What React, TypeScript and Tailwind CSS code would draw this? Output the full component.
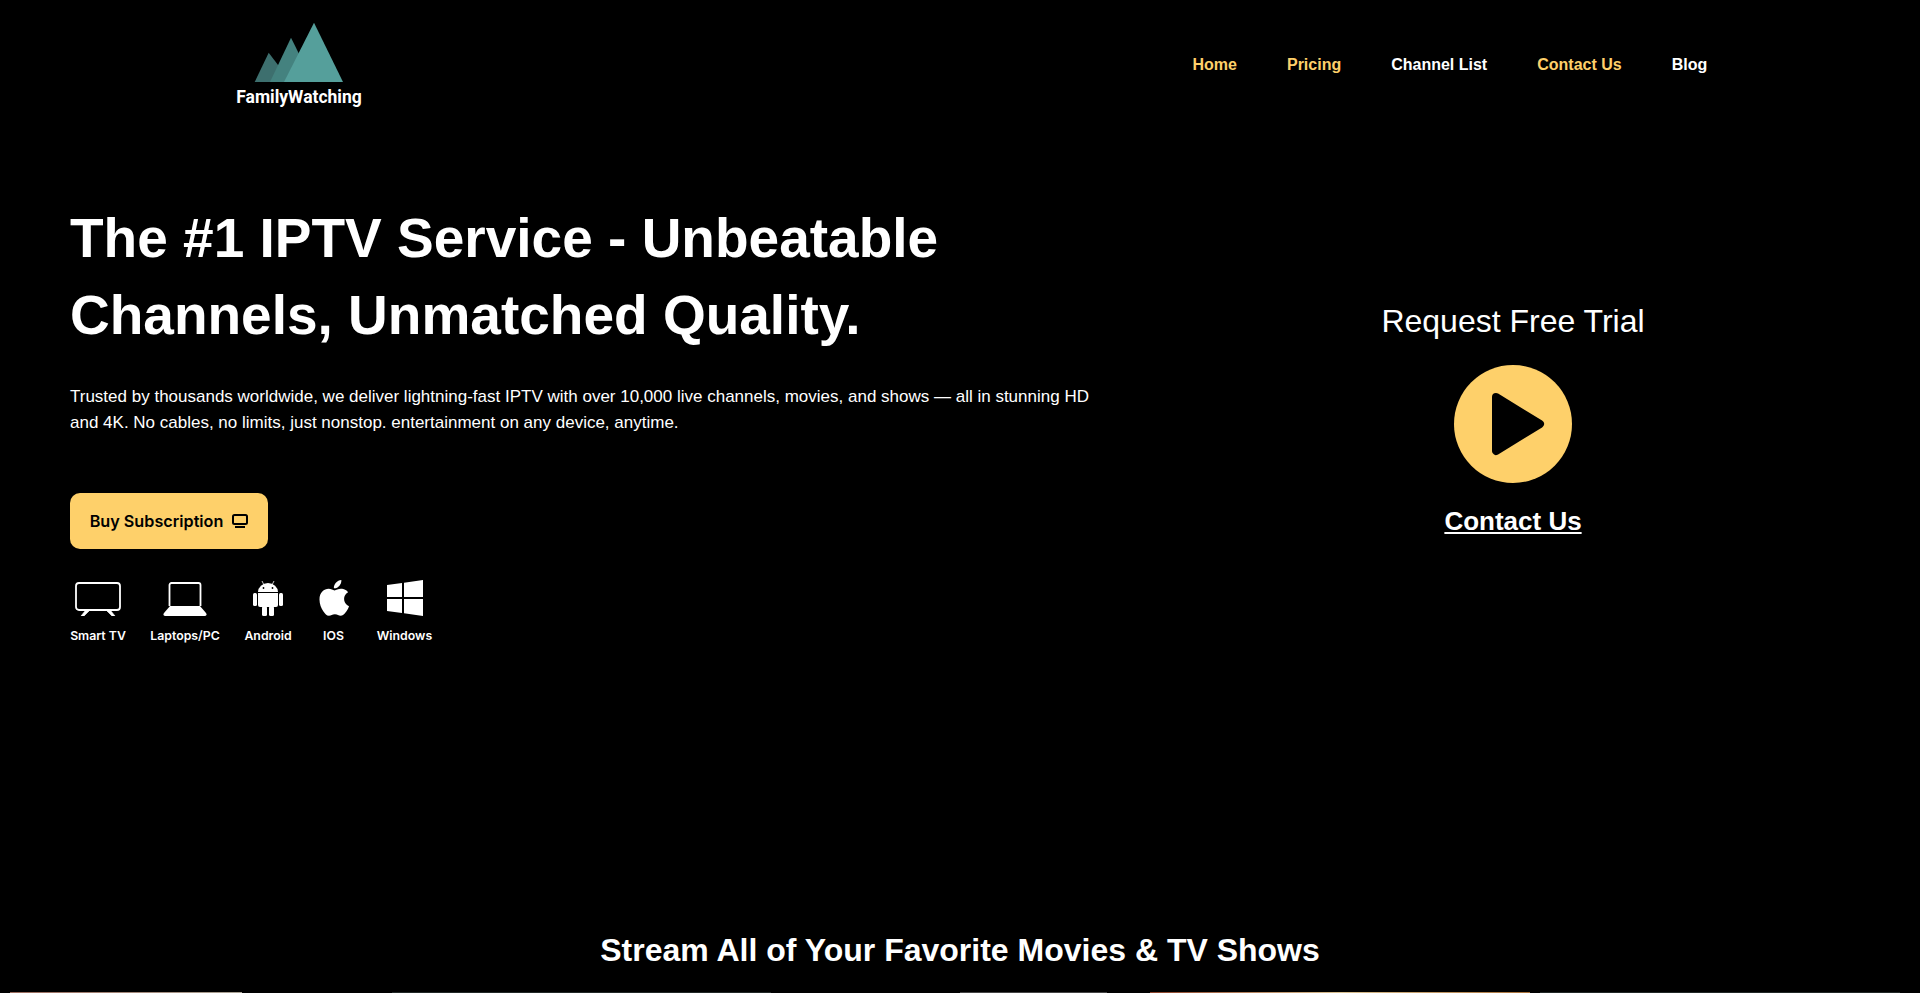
function Logo() {
  return (
    <svg width="92" height="62" viewBox="0 0 92 62">
      <polygon points="1.700,60 15.700,30.700 38,60" fill="#3d6f6e" />
      <polygon points="17,60 38,15.700 60,60" fill="#44827f" />
      <polygon points="31,60 61,0.700 90,60" fill="#559f9b" />
    </svg>
  );
}

function TvIcon() {
  return (
    <svg width="46" height="36" viewBox="0 0 46 36" fill="none" stroke="#fff">
      <rect x="1" y="3" width="44" height="27" rx="3" strokeWidth="1.800" />
      <path d="M6 36l4-5h4l-5 5zM40 36l-4-5h-4l5 5z" fill="#fff" strokeWidth="0.6" />
    </svg>
  );
}

function LaptopIcon() {
  return (
    <svg width="44" height="36" viewBox="0 0 44 36" fill="none">
      <path d="M6.500 26V5a2 2 0 012-2h27a2 2 0 012 2v21" stroke="#fff" strokeWidth="1.800" />
      <path d="M7 26h30l6 7a2 2 0 01-1 3H2a2 2 0 01-1-3z" fill="#fff" />
    </svg>
  );
}

function AndroidIcon() {
  return (
    <svg width="30" height="36" viewBox="0 0 30 36" fill="#fff">
      <path d="M5 12a10 9 0 0120 0z" />
      <path d="M9 1l2 4M21 1l-2 4" stroke="#fff" strokeWidth="0.8" />
      <circle cx="10.500" cy="8" r="0.9" fill="#000" />
      <circle cx="19.500" cy="8" r="0.9" fill="#000" />
      <path d="M5 13h20v12a2 2 0 01-2 2H7a2 2 0 01-2-2z" />
      <rect x="0" y="13" width="4" height="13" rx="1.500" />
      <rect x="26" y="13" width="4" height="13" rx="1.500" />
      <rect x="9" y="26" width="5" height="10" rx="1.500" />
      <rect x="16" y="26" width="5" height="10" rx="1.500" />
    </svg>
  );
}

function AppleIcon() {
  return (
    <svg width="30" height="36" viewBox="0 0 814 1000" fill="#fff" preserveAspectRatio="none">
      <path d="M788 341c-6 4-107 61-107 188 0 147 129 199 133 200-1 3-21 71-68 141-42 61-86 122-153 122s-84-39-161-39c-75 0-102 40-163 40s-104-57-153-126C59 786 13 660 13 540c0-192 125-294 248-294 65 0 120 43 161 43 39 0 100-45 174-45 28 0 129 2 192 97zM555 157c31-36 52-87 52-137 0-7 0-14-2-20-51 2-111 34-147 76-28 32-55 83-55 134 0 8 1 15 2 18 3 1 9 2 14 2 45 0 103-31 136-73z" />
    </svg>
  );
}

function WindowsIcon() {
  return (
    <svg width="36" height="36" viewBox="0 0 36 36" fill="#fff">
      <polygon points="0,5 15,3 15,17 0,17" />
      <polygon points="17,2.700 36,0 36,17 17,17" />
      <polygon points="0,19 15,19 15,33 0,31" />
      <polygon points="17,19 36,19 36,36 17,33.300" />
    </svg>
  );
}

function Device({ icon, label, width }: { icon: React.ReactNode; label: string; width: string }) {
  return (
    <div className={`flex flex-col items-center ${width}`}>
      <div className="flex h-[36px] items-center justify-center">{icon}</div>
      <span className="mt-[12px] text-[12.3px] leading-[16px] font-semibold text-white font-['Inter',sans-serif] whitespace-nowrap">
        {label}
      </span>
    </div>
  );
}

export default function App() {
  return (
    <div className="h-[993px] overflow-hidden bg-black text-white font-['Liberation_Sans',Arial,sans-serif]">
      <header className="flex h-[128px] items-start">
        <div className="ml-[236px] flex w-[126px] flex-col items-center pt-[22px]">
          <Logo />
          <span className="mt-[3px] text-[17.5px] leading-[20px] font-bold font-['Roboto',sans-serif] whitespace-nowrap">FamilyWatching</span>
        </div>
        <nav className="ml-[830.5px] flex gap-[50px] pt-[55px] text-[16px] leading-[20px] font-bold">
          <a className="text-[#fed06a]">Home</a>
          <a className="text-[#fed06a]">Pricing</a>
          <a>Channel List</a>
          <a className="text-[#fed06a]">Contact Us</a>
          <a>Blog</a>
        </nav>
      </header>

      <main className="grid h-[802px] grid-cols-[1106px_814px]">
        <section className="pl-[70px] pt-[72px]">
          <h1 className="text-[55px] leading-[77px] font-bold">
            The #1 IPTV Service - Unbeatable
            <br />
            Channels, Unmatched Quality.
          </h1>
          <p className="mt-[30px] w-[1030px] text-[17px] leading-[26px]">
            Trusted by thousands worldwide, we deliver lightning-fast IPTV with over 10,000 live channels, movies, and shows — all in stunning HD and 4K. No cables, no limits, just nonstop. entertainment on any device, anytime.
          </p>
          <button className="mt-[57px] flex h-[56px] w-[198px] items-center justify-center gap-[9px] rounded-[10px] bg-[#fed06a] text-[16.2px] font-semibold text-black font-['Inter',sans-serif]">
            Buy Subscription
            <svg width="16" height="14" viewBox="0 0 16 14" fill="none" stroke="#000" strokeWidth="2">
              <rect x="1" y="1" width="14" height="9" rx="1.500" />
              <path d="M3 13h10" />
            </svg>
          </button>
          <div className="mt-[31px] flex gap-[24px]">
            <Device icon={<TvIcon />} label="Smart TV" width="w-[56px]" />
            <Device icon={<LaptopIcon />} label="Laptops/PC" width="w-[70px]" />
            <Device icon={<AndroidIcon />} label="Android" width="w-[48px]" />
            <Device icon={<AppleIcon />} label="IOS" width="w-[35px]" />
            <Device icon={<WindowsIcon />} label="Windows" width="w-[59px]" />
          </div>
        </section>

        <section className="flex flex-col items-center pt-[171px]">
          <h2 className="text-[32px] leading-[44px]">Request Free Trial</h2>
          <div className="mt-[22px] flex h-[118px] w-[118px] items-center justify-center rounded-full bg-[#fed06a]">
            <svg className="ml-[10px]" width="54" height="64" viewBox="0 0 54 64" fill="#000" stroke="#000" strokeWidth="8" strokeLinejoin="round">
              <polygon points="5,5 49,32 5,59" />
            </svg>
          </div>
          <a className="mt-[22px] text-[26px] leading-[32px] font-bold underline">Contact Us</a>
        </section>
      </main>

      <section>
        <h2 className="text-center text-[32px] leading-[40px] font-bold">Stream All of Your Favorite Movies &amp; TV Shows</h2>
        <div className="mt-[22px] flex h-[1px]">
          <div className="ml-[10px] h-full w-[232px] bg-linear-to-r from-[#9a6a5c] to-[#a8a294]" />
          <div className="ml-[150px] h-full w-[379px] bg-[#222827]" />
          <div className="ml-[189px] h-full w-[147px] bg-[#444444]" />
          <div className="ml-[43px] h-full w-[380px] bg-linear-to-r from-[#8a4028] via-[#d8c090] to-[#a87038]" />
          <div className="ml-[10px] h-full w-[360px] bg-[#222827]" />
        </div>
      </section>
    </div>
  );
}
